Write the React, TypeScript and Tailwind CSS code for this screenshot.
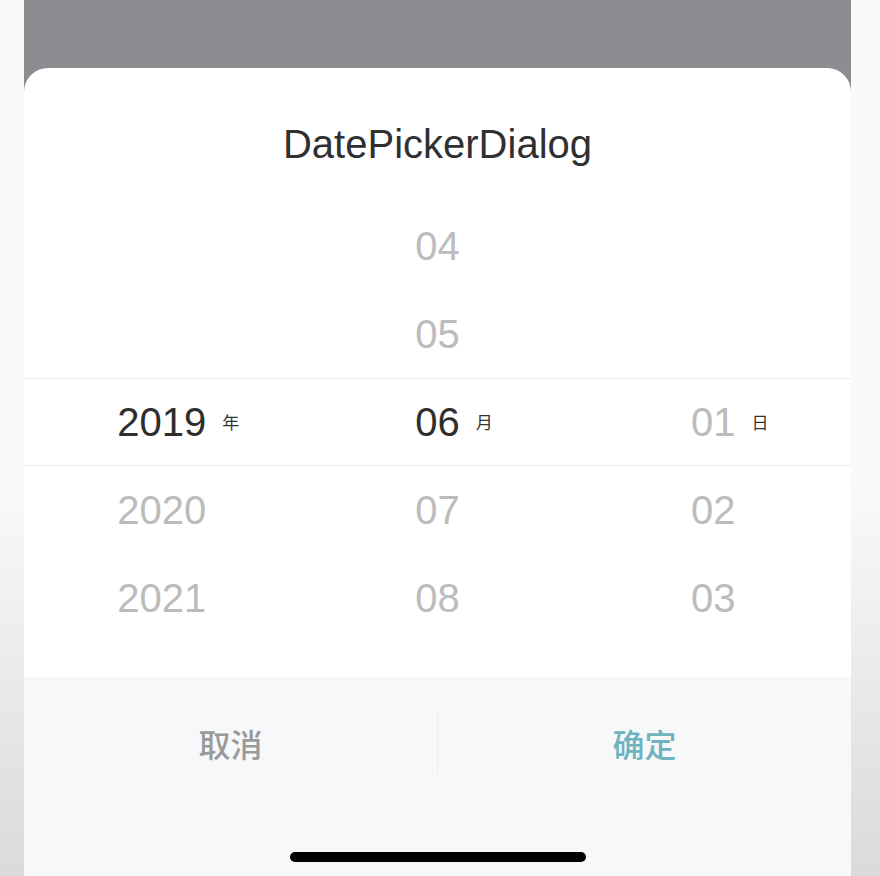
import React from 'react';

const latin = { fontFamily: '"Liberation Sans", Arial, sans-serif' };
const cjk = { fontFamily: '"Noto Sans CJK SC", "Noto Sans", sans-serif' };

interface Cell {
    value?: string;
    unit?: string;
    tone?: 'active' | 'muted';
}

// rows of the wheel, top to bottom; index 2 is the selected row
const rows: Cell[][] = [
    [{}, { value: '04', tone: 'muted' }, {}],
    [{}, { value: '05', tone: 'muted' }, {}],
    [
        { value: '2019', unit: '年', tone: 'active' },
        { value: '06', unit: '月', tone: 'active' },
        { value: '01', unit: '日', tone: 'muted' },
    ],
    [
        { value: '2020', tone: 'muted' },
        { value: '07', tone: 'muted' },
        { value: '02', tone: 'muted' },
    ],
    [
        { value: '2021', tone: 'muted' },
        { value: '08', tone: 'muted' },
        { value: '03', tone: 'muted' },
    ],
];

function WheelCell({ cell }: { cell: Cell }) {
    return (
        <div className="grid grid-cols-[1fr_auto_1fr] items-center">
            <span />
            <span
                className={cell.tone === 'active' ? 'text-[40px] text-[#2e2e2e]' : 'text-[40px] text-[#bcbcbc]'}
                style={latin}
            >
                {cell.value}
            </span>
            <span className="pl-[16px] text-[17px] text-[#333333]" style={cjk}>
                {cell.unit}
            </span>
        </div>
    );
}

export default function App() {
    return (
        <div className="flex h-[876px] w-full overflow-hidden bg-linear-to-b from-[#fafafa] from-55% to-[#dadada]">
            <div className="w-[24px] shrink-0" />
            <div className="flex w-[827px] shrink-0 flex-col bg-[#8c8d91] pt-[68px]">
                <div className="flex flex-1 flex-col overflow-hidden rounded-t-[24px] bg-white">
                    {/* title */}
                    <div className="flex h-[134px] items-center justify-center pt-[18px]">
                        <h1 className="text-[40px] text-[#303030]" style={latin}>
                            DatePickerDialog
                        </h1>
                    </div>

                    {/* wheels */}
                    <div className="flex flex-col pb-[35px]">
                        {rows.map((row, i) => (
                            <div
                                key={i}
                                className={
                                    i === 2
                                        ? 'grid h-[88px] grid-cols-3 items-center border-y border-[#ececec]'
                                        : 'grid h-[88px] grid-cols-3 items-center'
                                }
                            >
                                {row.map((cell, j) => (
                                    <WheelCell key={j} cell={cell} />
                                ))}
                            </div>
                        ))}
                    </div>

                    {/* footer */}
                    <div className="flex flex-1 flex-col bg-[#f7f8fa]">
                        <div className="flex h-[132px] items-center">
                            <button className="flex-1 text-[32px] font-medium text-[#9a9a9a]" style={cjk}>
                                取消
                            </button>
                            <div className="h-[62px] w-px bg-[#eceef0]" />
                            <button className="flex-1 text-[32px] font-medium text-[#6fb3bf]" style={cjk}>
                                确定
                            </button>
                        </div>
                        <div className="flex flex-1 items-start justify-center pt-[43px]">
                            <div className="h-[10px] w-[296px] rounded-full bg-black" />
                        </div>
                    </div>
                </div>
            </div>
            <div className="flex-1" />
        </div>
    );
}
